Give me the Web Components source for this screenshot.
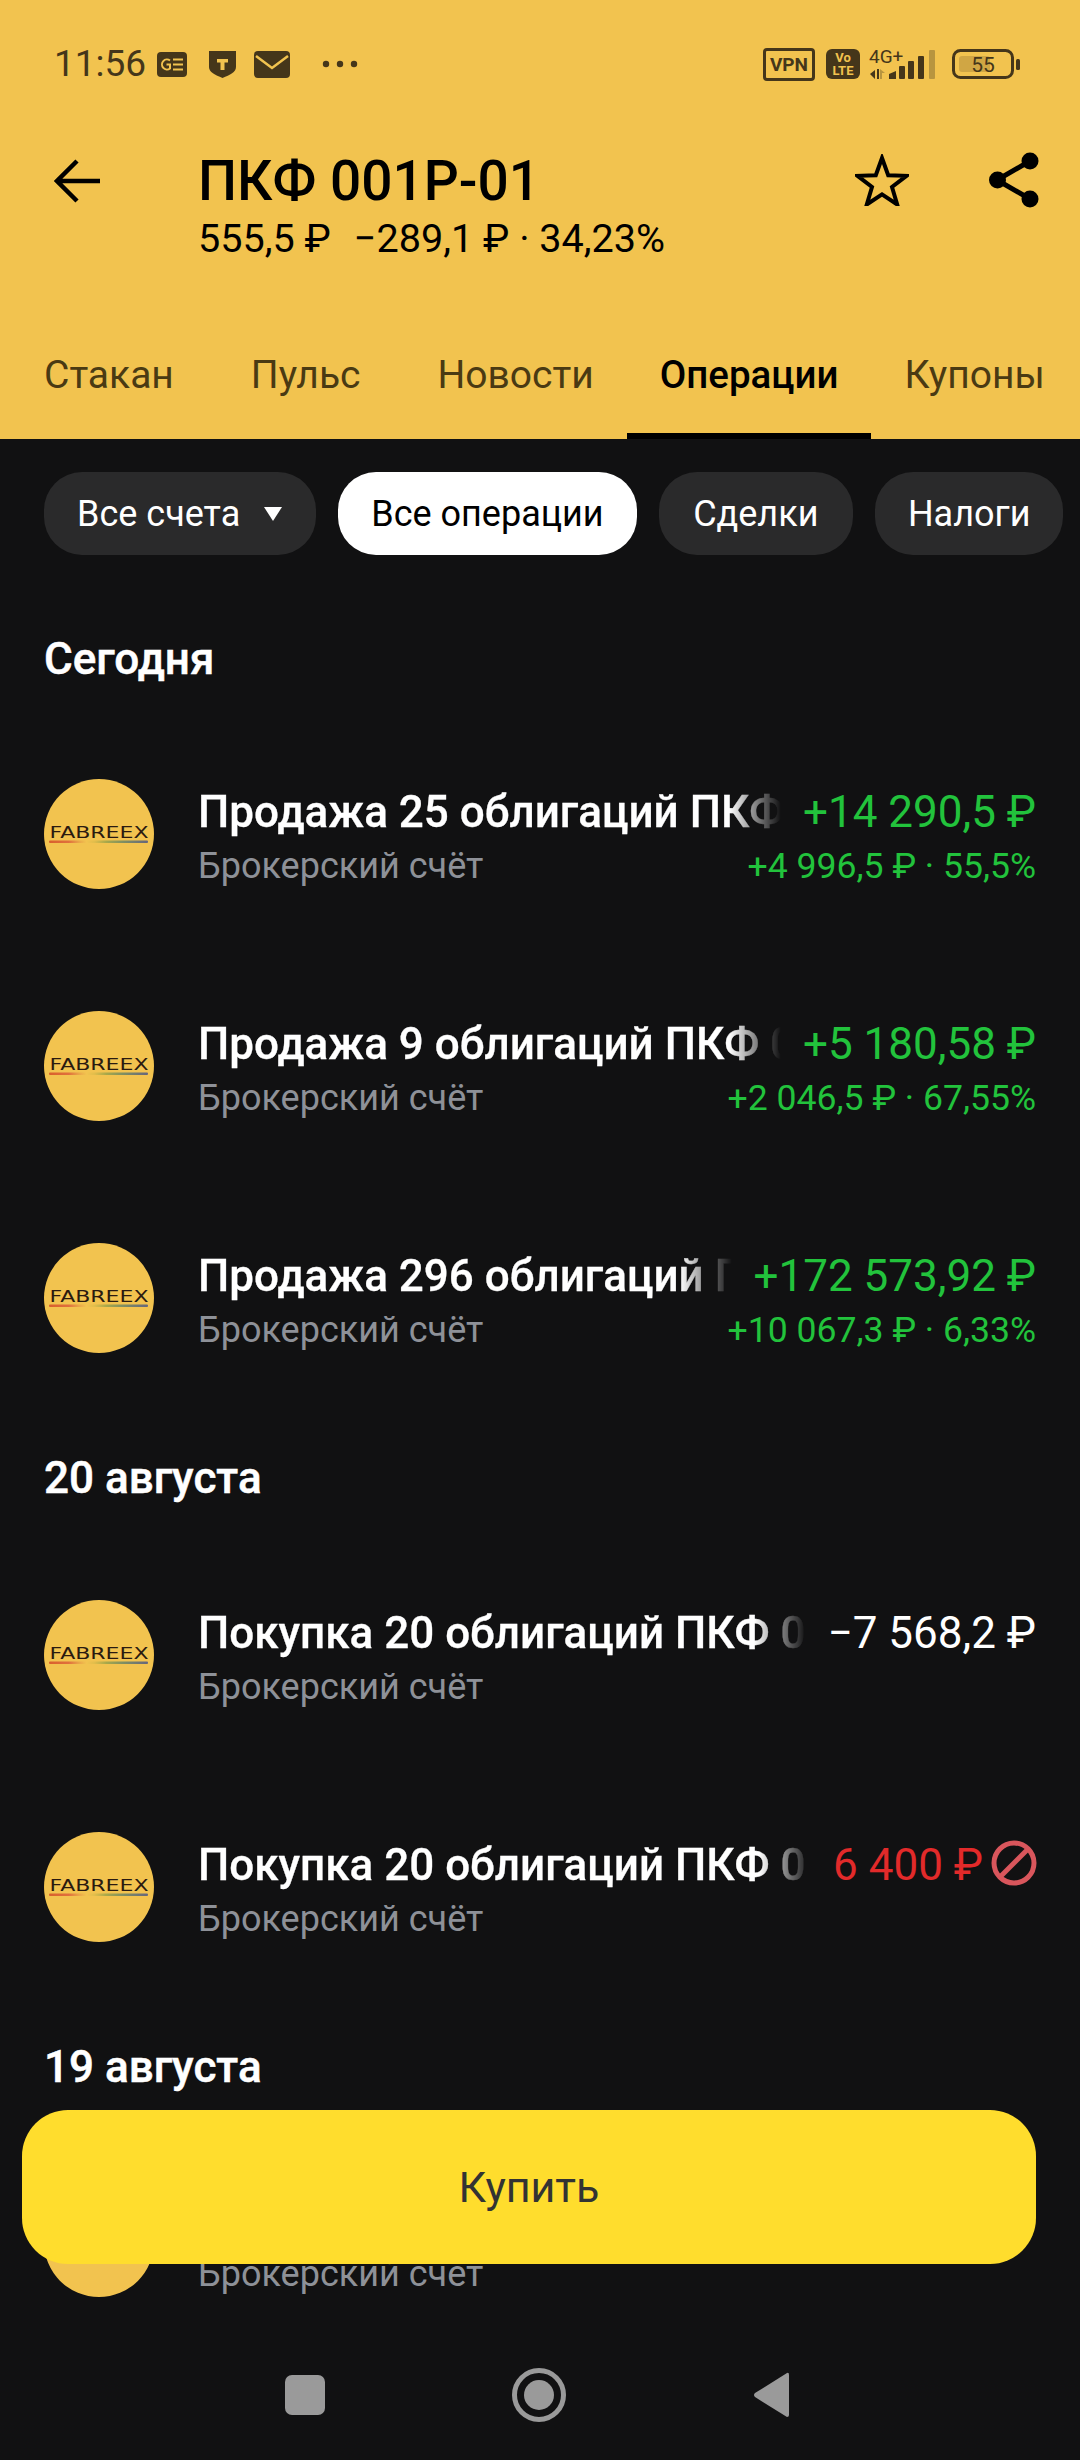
<!DOCTYPE html>
<html lang="ru">
<head>
<meta charset="utf-8">
<title>ПКФ 001Р-01</title>
<style>
  html, body { margin: 0; background: #111112; }
  body { font-family: Roboto, "Noto Sans", sans-serif; }
</style>
</head>
<body>
<app-shell>
  <header-panel slot="header">
    <status-bar></status-bar>
    <top-bar>
      <span slot="title">ПКФ 001Р-01</span>
      <span slot="price">555,5 ₽</span>
      <span slot="change">−289,1 ₽ · 34,23%</span>
    </top-bar>
    <tab-strip>
      <tab-item>Стакан</tab-item>
      <tab-item>Пульс</tab-item>
      <tab-item>Новости</tab-item>
      <tab-item active>Операции</tab-item>
      <tab-item>Купоны</tab-item>
    </tab-strip>
  </header-panel>

  <filter-strip>
    <filter-pill caret>Все счета</filter-pill>
    <filter-pill active>Все операции</filter-pill>
    <filter-pill wide>Сделки</filter-pill>
    <filter-pill>Налоги</filter-pill>
  </filter-strip>

  <day-heading first>Сегодня</day-heading>
  <op-row>
    <span slot="title">Продажа 25 облигаций ПКФ</span>
    <span slot="sub">Брокерский счёт</span>
    <span slot="amount" class="up">+14 290,5 ₽</span>
    <span slot="detail">+4 996,5 ₽ · 55,5%</span>
  </op-row>
  <op-row>
    <span slot="title">Продажа 9 облигаций ПКФ 0</span>
    <span slot="sub">Брокерский счёт</span>
    <span slot="amount" class="up">+5 180,58 ₽</span>
    <span slot="detail">+2 046,5 ₽ · 67,55%</span>
  </op-row>
  <op-row>
    <span slot="title">Продажа 296 облигаций П</span>
    <span slot="sub">Брокерский счёт</span>
    <span slot="amount" class="up">+172 573,92 ₽</span>
    <span slot="detail">+10 067,3 ₽ · 6,33%</span>
  </op-row>

  <day-heading after-gap>20 августа</day-heading>
  <op-row>
    <span slot="title">Покупка 20 облигаций ПКФ 0</span>
    <span slot="sub">Брокерский счёт</span>
    <span slot="amount">−7 568,2 ₽</span>
  </op-row>
  <op-row state="declined">
    <span slot="title">Покупка 20 облигаций ПКФ 0</span>
    <span slot="sub">Брокерский счёт</span>
    <span slot="amount">6 400 ₽</span>
  </op-row>

  <day-heading>19 августа</day-heading>
  <op-row>
    <span slot="sub">Брокерский счёт</span>
  </op-row>

  <buy-button slot="overlay">Купить</buy-button>
  <nav-bar slot="overlay"></nav-bar>
</app-shell>

<script>
class AppShell extends HTMLElement {
  constructor() {
    super();
    this.attachShadow({ mode: 'open' });
  }
  connectedCallback() {
    this.shadowRoot.innerHTML = `
      <style>
        :host {
          display: block;
          position: relative;
          width: 1080px;
          height: 2460px;
          overflow: hidden;
          background: #111112;
          color: #fff;
        }
        .content { display: flex; flex-direction: column; }
      </style>
      <slot name="header"></slot>
      <div class="content"><slot></slot></div>
      <slot name="overlay"></slot>
    `;
  }
}

class HeaderPanel extends HTMLElement {
  constructor() {
    super();
    this.attachShadow({ mode: 'open' });
  }
  connectedCallback() {
    this.shadowRoot.innerHTML = `
      <style>
        :host {
          display: flex;
          flex-direction: column;
          height: 439px;
          background: #f2c34f;
          color: #000;
        }
      </style>
      <slot></slot>
    `;
  }
}

class StatusBar extends HTMLElement {
  constructor() {
    super();
    this.attachShadow({ mode: 'open' });
  }
  connectedCallback() {
    const ink = '#45361a';
    this.shadowRoot.innerHTML = `
      <style>
        :host {
          display: flex;
          align-items: center;
          justify-content: space-between;
          height: 128px;
          padding: 0 60px 0 54px;
          color: ${ink};
        }
        .side { display: flex; align-items: center; }
        .time { font-size: 37px; line-height: 40px; margin-right: 11px; }
        svg { display: block; flex: none; overflow: visible; }
        svg text { font-family: Roboto, sans-serif; }
        .m-22 { margin-left: 22px; }
        .m-18 { margin-left: 18px; }
        .m-32 { margin-left: 32px; }
        .m-11 { margin-left: 11px; }
        .m-9 { margin-left: 9px; }
        .m-15 { margin-left: 15px; }
      </style>
      <div class="side">
        <span class="time">11:56</span>
        <svg width="30" height="25" viewBox="0 0 30 25">
          <rect width="30" height="25" rx="4" fill="${ink}"/>
          <path d="M13 8.500a5 5 0 1 0 0 8v-4H9.500" fill="none" stroke="#f2c34f" stroke-width="2"/>
          <path d="M16 7.500h10M16 12.500h10M16 17.500h10" stroke="#f2c34f" stroke-width="2"/>
        </svg>
        <svg class="m-22" width="27" height="27" viewBox="0 0 27 27">
          <path d="M0 0h27v16c0 5-6 8-13.500 11C6 24 0 21 0 16z" fill="${ink}"/>
          <path d="M8 8h11v3.500h-3.500V19h-4v-7.500H8z" fill="#f2c34f"/>
        </svg>
        <svg class="m-18" width="36" height="27" viewBox="0 0 36 27">
          <path d="M4 0h28q4 0 4 4v19q0 4-4 4H4q-4 0-4-4V4q0-4 4-4z" fill="${ink}"/>
          <path d="M2 5l16 12L34 5" fill="none" stroke="#f2c34f" stroke-width="2.500"/>
        </svg>
        <svg class="m-32" width="36" height="8" viewBox="0 0 36 8">
          <circle cx="4" cy="4" r="3.200" fill="${ink}"/>
          <circle cx="18" cy="4" r="3.200" fill="${ink}"/>
          <circle cx="32" cy="4" r="3.200" fill="${ink}"/>
        </svg>
      </div>
      <div class="side">
        <svg width="52" height="33" viewBox="0 0 52 33">
          <rect x="1.500" y="1.500" width="49" height="30" rx="2.500" fill="none" stroke="${ink}" stroke-width="3"/>
          <text x="26" y="23" font-size="19" font-weight="700" text-anchor="middle" fill="${ink}">VPN</text>
        </svg>
        <svg class="m-11" width="34" height="30" viewBox="0 0 34 30">
          <rect width="34" height="30" rx="6" fill="${ink}"/>
          <text x="17" y="13" font-size="13" font-weight="700" text-anchor="middle" fill="#f2c34f">Vo</text>
          <text x="17" y="26" font-size="13" font-weight="700" text-anchor="middle" fill="#f2c34f">LTE</text>
        </svg>
        <svg class="m-9" width="68" height="33" viewBox="0 0 68 33">
          <text x="0" y="15" font-size="19" fill="${ink}">4G+</text>
          <path d="M1 26l5-4v9zM8 21h2v10H8z" fill="${ink}"/>
          <path d="M11 21l5 4h-3v6h-2z" fill="#b8953f"/>
          <path d="M20 26l7-3v8h-7z" fill="${ink}"/>
          <rect x="30" y="18" width="6" height="13" rx="1" fill="${ink}"/>
          <rect x="39" y="13" width="6" height="18" rx="1" fill="${ink}"/>
          <rect x="49" y="8" width="6" height="23" rx="1" fill="${ink}"/>
          <rect x="60" y="2" width="6" height="29" rx="1" fill="#b8953f"/>
        </svg>
        <svg class="m-15" width="68" height="30" viewBox="0 0 68 30">
          <rect x="1.500" y="1.500" width="59" height="27" rx="7" fill="none" stroke="${ink}" stroke-width="3"/>
          <rect x="7" y="7" width="31" height="16" rx="3" fill="#d0a644"/>
          <rect x="64" y="10" width="4" height="11" rx="1.500" fill="${ink}"/>
          <text x="31" y="23" font-size="21" text-anchor="middle" fill="${ink}">55</text>
        </svg>
      </div>
    `;
  }
}

class TopBar extends HTMLElement {
  constructor() {
    super();
    this.attachShadow({ mode: 'open' });
  }
  connectedCallback() {
    this.shadowRoot.innerHTML = `
      <style>
        :host {
          display: flex;
          align-items: flex-start;
          height: 182px;
          padding: 0 41px 0 54px;
        }
        .back { flex: none; width: 144px; padding-top: 31px; }
        .text { flex: 1; min-width: 0; }
        .title { font-size: 55px; line-height: 60px; font-weight: 500; margin-top: 23px; }
        .sub { display: flex; gap: 23px; font-size: 39.600px; line-height: 44px; margin-top: 6px; white-space: nowrap; }
        .actions { flex: none; display: flex; gap: 80px; padding-top: 24px; align-items: center; }
        svg { display: block; }
      </style>
      <div class="back">
        <svg width="46" height="44" viewBox="0 0 46 44">
          <path d="M46 22H4M23 2L3 22l20 20" fill="none" stroke="#000" stroke-width="4.500"/>
        </svg>
      </div>
      <div class="text">
        <div class="title"><slot name="title"></slot></div>
        <div class="sub"><slot name="price"></slot><slot name="change"></slot></div>
      </div>
      <div class="actions">
        <svg width="54" height="52" viewBox="0 0 54 52">
          <path d="M27 4l6.200 17.200 18.300.6-14.500 11.200 5.200 17.500L27 40.300 11.800 50.500 17 33 2.500 21.800l18.300-.6z" fill="none" stroke="#000" stroke-width="4"/>
        </svg>
        <svg width="50" height="56" viewBox="0 0 50 56">
          <path d="M41 9L8 28l33 19" fill="none" stroke="#000" stroke-width="5"/>
          <circle cx="41" cy="9" r="8.500"/>
          <circle cx="8.500" cy="28" r="8.500"/>
          <circle cx="41" cy="47" r="8.500"/>
        </svg>
      </div>
    `;
  }
}

class TabStrip extends HTMLElement {
  constructor() {
    super();
    this.attachShadow({ mode: 'open' });
  }
  connectedCallback() {
    this.shadowRoot.innerHTML = `
      <style>
        :host {
          display: flex;
          height: 129px;
          padding-left: 10px;
          gap: 9px;
          white-space: nowrap;
        }
      </style>
      <slot></slot>
    `;
  }
}

class TabItem extends HTMLElement {
  constructor() {
    super();
    this.attachShadow({ mode: 'open' });
  }
  connectedCallback() {
    this.shadowRoot.innerHTML = `
      <style>
        :host {
          display: flex;
          align-items: center;
          box-sizing: border-box;
          padding: 6px 34px 0;
          font-size: 39px;
          color: #4a3a13;
          border-bottom: 6px solid transparent;
        }
        :host([active]) {
          color: #000;
          font-size: 38.500px;
          font-weight: 500;
          padding: 6px 33px 0;
          border-bottom-color: #000;
          margin-left: -10px;
          margin-right: -10px;
        }
      </style>
      <slot></slot>
    `;
  }
}

class FilterStrip extends HTMLElement {
  constructor() {
    super();
    this.attachShadow({ mode: 'open' });
  }
  connectedCallback() {
    this.shadowRoot.innerHTML = `
      <style>
        :host {
          display: flex;
          gap: 22px;
          padding: 33px 0 0 44px;
          white-space: nowrap;
        }
      </style>
      <slot></slot>
    `;
  }
}

class FilterPill extends HTMLElement {
  constructor() {
    super();
    this.attachShadow({ mode: 'open' });
  }
  connectedCallback() {
    const caret = this.hasAttribute('caret')
      ? '<svg width="20" height="16" viewBox="0 0 20 16"><path d="M1 1h18l-9 14z" fill="#fff"/></svg>'
      : '';
    this.shadowRoot.innerHTML = `
      <style>
        :host {
          display: flex;
          align-items: center;
          gap: 23px;
          height: 83px;
          padding: 0 33px;
          border-radius: 38px;
          background: #2a2a2b;
          color: #fff;
          font-size: 36px;
        }
        :host([active]) { background: #fff; color: #000; }
        :host([wide]) { padding: 0 34.500px; }
      </style>
      <slot></slot>${caret}
    `;
  }
}

class DayHeading extends HTMLElement {
  constructor() {
    super();
    this.attachShadow({ mode: 'open' });
  }
  connectedCallback() {
    this.shadowRoot.innerHTML = `
      <style>
        :host {
          display: block;
          height: 56px;
          margin: 36px 44px 31px;
          font-size: 44px;
          line-height: 56px;
          font-weight: 500;
          color: #fff;
          -webkit-text-stroke: 0.5px #fff;
        }
        :host([first]) { margin-top: 76px; }
        :host([after-gap]) { margin-bottom: 33px; }
      </style>
      <slot></slot>
    `;
  }
}

class FabreexLogo extends HTMLElement {
  constructor() {
    super();
    this.attachShadow({ mode: 'open' });
  }
  connectedCallback() {
    this.shadowRoot.innerHTML = `
      <style>
        :host { display: block; width: 110px; height: 110px; }
        svg { display: block; }
      </style>
      <svg width="110" height="110" viewBox="0 0 110 110">
        <defs>
          <linearGradient id="band" x1="0" x2="1" y1="0" y2="0">
            <stop offset="0" stop-color="#d9602c"/>
            <stop offset="0.2" stop-color="#e0703c"/>
            <stop offset="0.3" stop-color="#e9a548"/>
            <stop offset="0.38" stop-color="#f2c34f"/>
            <stop offset="0.46" stop-color="#e2bd4b"/>
            <stop offset="0.58" stop-color="#a8a84a"/>
            <stop offset="0.75" stop-color="#7f8f62"/>
            <stop offset="1" stop-color="#66667c"/>
          </linearGradient>
        </defs>
        <circle cx="55" cy="55" r="55" fill="#f2c34f"/>
        <text x="55" y="59" text-anchor="middle" font-family="'DejaVu Sans', sans-serif" font-size="16.500" textLength="99" lengthAdjust="spacingAndGlyphs" fill="#2a1a10">FABREEX</text>
        <rect x="5" y="61.500" width="99" height="2.500" rx="1" fill="url(#band)"/>
      </svg>
    `;
  }
}

class OpRow extends HTMLElement {
  constructor() {
    super();
    this.attachShadow({ mode: 'open' });
  }
  connectedCallback() {
    const declined = this.getAttribute('state') === 'declined';
    const ban = declined
      ? `<svg class="ban" width="46" height="46" viewBox="0 0 46 46">
           <circle cx="23" cy="23" r="20" fill="none" stroke="#d9565c" stroke-width="5"/>
           <path d="M37 9L9 37" stroke="#d9565c" stroke-width="5"/>
         </svg>`
      : '';
    const gained = this.querySelector('[slot=amount].up');
    const amountColor = declined ? '#e22a2a' : gained ? '#22c33c' : '#fff';
    this.shadowRoot.innerHTML = `
      <style>
        :host {
          display: flex;
          align-items: center;
          height: 232px;
          padding: 0 44px;
          box-sizing: border-box;
        }
        fabreex-logo { flex: none; margin-right: 44px; }
        .body { flex: 1; min-width: 0; padding-top: 7.500px; }
        .line { display: flex; align-items: center; white-space: nowrap; }
        .top { height: 50px; }
        .bottom { height: 46px; margin-top: 6.500px; justify-content: space-between; }
        .title {
          flex: 1;
          min-width: 0;
          overflow: hidden;
          font-size: 44px;
          font-weight: 500;
          color: #fff;
          -webkit-text-stroke: 0.3px #fff;
          -webkit-mask-image: linear-gradient(to right, #000 calc(100% - 64px), transparent calc(100% - 12px));
          mask-image: linear-gradient(to right, #000 calc(100% - 64px), transparent calc(100% - 12px));
        }
        .amount { flex: none; font-size: 44px; color: ${amountColor}; margin-left: 10px; }
        .ban { flex: none; margin-left: 8px; margin-right: -1px; margin-top: -4px; }
        .sub { font-size: 36px; color: #8e9198; }
        .detail { font-size: 35.600px; color: #22c33c; }
      </style>
      <fabreex-logo></fabreex-logo>
      <div class="body">
        <div class="line top">
          <div class="title"><slot name="title"></slot></div>
          <div class="amount"><slot name="amount"></slot></div>
          ${ban}
        </div>
        <div class="line bottom">
          <div class="sub"><slot name="sub"></slot></div>
          <div class="detail"><slot name="detail"></slot></div>
        </div>
      </div>
    `;
  }
}

class BuyButton extends HTMLElement {
  constructor() {
    super();
    this.attachShadow({ mode: 'open' });
  }
  connectedCallback() {
    this.shadowRoot.innerHTML = `
      <style>
        :host {
          position: absolute;
          left: 22px;
          top: 2110px;
          width: 1014px;
          height: 154px;
          display: flex;
          align-items: center;
          justify-content: center;
          border-radius: 46px;
          background: #ffdd2d;
          color: #333;
          font-size: 43px;
        }
      </style>
      <slot></slot>
    `;
  }
}

class NavBar extends HTMLElement {
  constructor() {
    super();
    this.attachShadow({ mode: 'open' });
  }
  connectedCallback() {
    this.shadowRoot.innerHTML = `
      <style>
        :host {
          position: absolute;
          left: 0;
          right: 0;
          top: 2330px;
          height: 130px;
          display: flex;
          justify-content: center;
          align-items: center;
          gap: 187px;
          box-sizing: border-box;
          padding-right: 6px;
        }
        svg { display: block; }
      </style>
      <svg width="40" height="40" viewBox="0 0 40 40"><rect width="40" height="40" rx="7" fill="#9a9a9a"/></svg>
      <svg width="54" height="54" viewBox="0 0 54 54">
        <circle cx="27" cy="27" r="24.500" fill="none" stroke="#9a9a9a" stroke-width="5"/>
        <circle cx="27" cy="27" r="15" fill="#9a9a9a"/>
      </svg>
      <svg width="36" height="46" viewBox="0 0 36 46"><path d="M34 1q2-1 2 2v40q0 2-2 2L2 25q-2-2 0-4z" fill="#9a9a9a"/></svg>
    `;
  }
}

customElements.define('fabreex-logo', FabreexLogo);
customElements.define('status-bar', StatusBar);
customElements.define('top-bar', TopBar);
customElements.define('tab-item', TabItem);
customElements.define('tab-strip', TabStrip);
customElements.define('header-panel', HeaderPanel);
customElements.define('filter-pill', FilterPill);
customElements.define('filter-strip', FilterStrip);
customElements.define('day-heading', DayHeading);
customElements.define('op-row', OpRow);
customElements.define('buy-button', BuyButton);
customElements.define('nav-bar', NavBar);
customElements.define('app-shell', AppShell);
</script>
</body>
</html>
